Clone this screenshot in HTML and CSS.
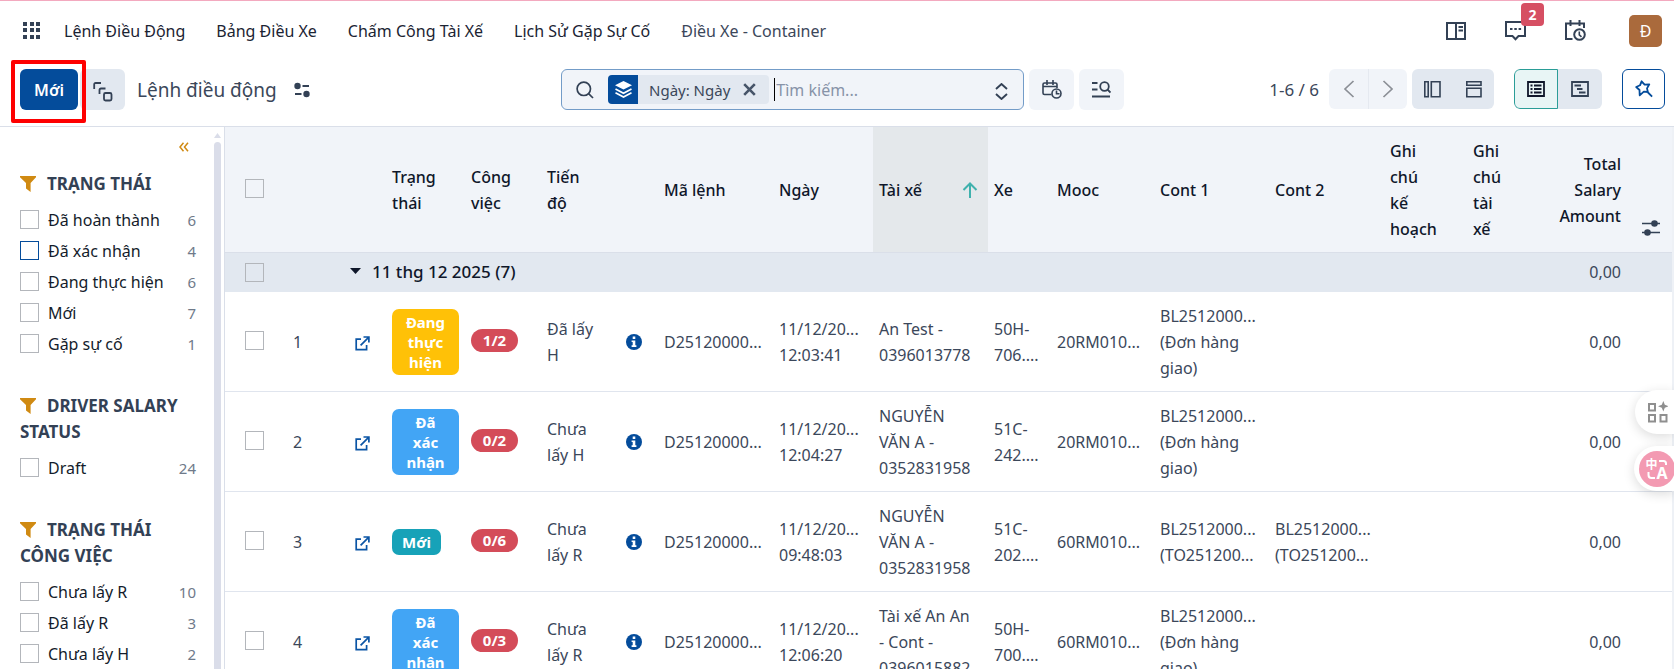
FILE: index.html
```html
<!DOCTYPE html>
<html lang="vi">
<head>
<meta charset="utf-8">
<title>Lệnh điều động</title>
<link rel="stylesheet" href="styles.css">
</head>
<body>
<svg class="defs" aria-hidden="true">
  <symbol id="funnel" viewBox="0 0 16 16"><path fill="currentColor" d="M0 0h16v1.2L10.6 7v9L6 12.4V7L0 1.2z"/></symbol>
  <symbol id="open" viewBox="0 0 15 15"><path fill="none" stroke="currentColor" stroke-width="1.7" d="M6 3.2H1.2v10.5h10.4V9M8.5 1h5.4v5.4M13.6 1.4L5.6 9.4"/></symbol>
  <symbol id="info" viewBox="0 0 16 16"><circle cx="8" cy="8" r="8" fill="currentColor"/><path fill="#fff" d="M6.700 2.600h2.600v2.500H6.700zM5.600 6.400h3.700v4.900h1.100v1.700H5.600v-1.700h1.100V8.100H5.600z"/></symbol>
</svg>

<header class="navbar">
  <button class="plain apps" aria-label="Ứng dụng"><svg width="18" height="18" viewBox="0 0 18 18" fill="#334155"><path d="M0 0h4v4H0zM7 0h4v4H7zM13 0h4v4h-4zM0 6h4v4H0zM7 6h4v4H7zM13 6h4v4h-4zM0 13h4v4H0zM7 13h4v4H7zM13 13h4v4h-4z"/></svg></button>
  <nav class="menu">
    <a href="#">Lệnh Điều Động</a>
    <a href="#">Bảng Điều Xe</a>
    <a href="#">Chấm Công Tài Xế</a>
    <a href="#">Lịch Sử Gặp Sự Cố</a>
    <a href="#" class="soft">Điều Xe - Container</a>
  </nav>
  <div class="systray">
    <button class="plain" aria-label="Hướng dẫn"><svg width="20" height="18" viewBox="0 0 20 18" fill="none" stroke="#334155" stroke-width="2"><path d="M1 1h18v16H1zM10 1v16M12.500 5h4.500M12.500 8.500h4.500"/></svg></button>
    <button class="plain chat" aria-label="Tin nhắn"><svg width="21" height="20" viewBox="0 0 21 20" fill="none" stroke="#334155" stroke-width="2"><path d="M1 1h19v14h-6.500L10.500 18.200 7.500 15H1z"/><path d="M5 8h2.500M9.300 8h2.500M13.600 8h2.500" stroke-width="2.200"/></svg><span class="badge">2</span></button>
    <button class="plain" aria-label="Hoạt động"><svg width="21" height="21" viewBox="0 0 21 21" fill="none" stroke="#334155" stroke-width="2"><path d="M7.500 19H1V3.500h18V8M5.500 0v6M14.500 0v6"/><circle cx="14.500" cy="14.500" r="5.300"/><path d="M14.300 11.500v3.300l2.200 2" stroke-width="1.600"/></svg></button>
    <button class="avatar">Đ</button>
  </div>
</header>

<div class="panel">
  <div class="panel-left">
    <span class="marked"><button class="btn-new">Mới</button></span>
    <button class="btn-dup" aria-label="Nhân bản"><svg width="20" height="20" viewBox="0 0 20 20" fill="none" stroke="#334155" stroke-width="1.800"><path d="M1.200 7V2.500Q1.200 1 2.700 1H8M6.500 12V8Q6.500 6.500 8 6.500h4.500"/><rect x="11" y="11" width="7.500" height="7.500" rx="1.500"/></svg></button>
    <h1>Lệnh điều động</h1>
    <button class="plain" aria-label="Tùy chọn"><svg width="16" height="16" viewBox="0 0 16 16"><circle cx="3.500" cy="4" r="3.200" fill="#334155"/><circle cx="12.500" cy="12" r="3.200" fill="#334155"/><path d="M8.500 4H15M1 12h6.500" stroke="#334155" stroke-width="1.800"/></svg></button>
  </div>
  <div class="panel-mid">
    <div class="search">
      <svg class="lens" width="18" height="18" viewBox="0 0 18 18" fill="none" stroke="#334155" stroke-width="1.700"><circle cx="7.800" cy="7.800" r="6.700"/><path d="M12.600 12.600L17 17"/></svg>
      <span class="facet">
        <span class="facet-icon"><svg width="17" height="17" viewBox="0 0 17 17"><path d="M8.500 0L17 4.300 8.500 8.600 0 4.300z" fill="#fff"/><path d="M.5 8l8 4.200 8-4.200M.5 11.800l8 4.200 8-4.200" fill="none" stroke="#fff" stroke-width="1.700"/></svg></span>
        <span class="facet-label">Ngày: Ngày</span>
        <button class="plain" aria-label="Xóa"><svg width="13" height="13" viewBox="0 0 13 13"><path d="M1.200 1.200l10.600 10.600M11.800 1.200L1.200 11.800" stroke="#475569" stroke-width="2.600"/></svg></button>
      </span>
      <span class="caret"></span>
      <input type="text" placeholder="Tìm kiếm..." aria-label="Tìm kiếm">
      <button class="plain updown" aria-label="Mở bộ lọc"><svg width="13" height="17" viewBox="0 0 13 17" fill="none" stroke="#334155" stroke-width="1.900"><path d="M1 6l5.500-5 5.500 5M1 11l5.500 5 5.500-5"/></svg></button>
    </div>
    <button class="tool" aria-label="Lọc theo ngày"><svg width="20" height="19" viewBox="0 0 20 19" fill="none" stroke="#334155" stroke-width="1.600"><path d="M9.500 14.500H2.500Q1 14.500 1 13V4.500Q1 3 2.500 3h11Q15 3 15 4.500V8M1 6.500h14M5 0v5M11 0v5"/><circle cx="14.500" cy="13.500" r="4.500"/><path d="M14.500 10.500v3.300h3"/></svg></button>
    <button class="tool" aria-label="Tìm nâng cao"><svg width="19" height="17" viewBox="0 0 19 17" fill="none" stroke="#334155" stroke-width="1.800"><circle cx="12.500" cy="5.500" r="4.300"/><path d="M15.500 8.500l3 3M0 2h5.500M0 8.500h5.500M0 15.500h18"/></svg></button>
  </div>
  <div class="panel-right">
    <span class="pager-text">1-6 / 6</span>
    <div class="group pager">
      <button aria-label="Trước"><svg width="12" height="18" viewBox="0 0 12 18"><path d="M10.500 1L2 9l8.500 8" fill="none" stroke="#8b8f96" stroke-width="1.700"/></svg></button>
      <button aria-label="Sau"><svg width="12" height="18" viewBox="0 0 12 18"><path d="M1.500 1L10 9l-8.500 8" fill="none" stroke="#8b8f96" stroke-width="1.700"/></svg></button>
    </div>
    <div class="group split">
      <button aria-label="Chia dọc"><svg width="17" height="17" viewBox="0 0 17 17" fill="none" stroke="#334155" stroke-width="1.600"><path d="M.8.8h3.400v15H.8zM7.300.8h8.700v15H7.300z"/></svg></button>
      <button aria-label="Chia ngang"><svg width="16" height="17" viewBox="0 0 16 17" fill="none" stroke="#334155" stroke-width="1.600"><path d="M.8.800h14.200v3.400H.8zM.8 7.300h14.200v8.500H.8z"/></svg></button>
    </div>
    <div class="group views">
      <button class="active" aria-label="Danh sách"><svg width="18" height="16" viewBox="0 0 18 16" fill="none" stroke="#0f172a" stroke-width="1.800"><path d="M1 1h16v14H1zM3.500 4.500h2M7 4.500h7.500M3.500 8h2M7 8h7.500M3.500 11.500h2M7 11.500h7.500"/></svg></button>
      <button aria-label="Gantt"><svg width="18" height="16" viewBox="0 0 18 16" fill="none" stroke="#334155" stroke-width="1.800"><path d="M1 1h16v14H1zM3.500 4.500h6.500M6 8h5.500M8 11.500h6.500"/></svg></button>
    </div>
    <button class="pin" aria-label="Ghim"><svg width="18" height="18" viewBox="0 0 18 18" fill="none" stroke="#044c9b" stroke-width="1.800" stroke-linejoin="round"><path d="M6.600 1.300L9.600 4.600 14.300 4.300 12 8.400 12.900 12 8.800 11.600 4.700 15.300 4.500 10 1.200 7 5 5.300zM12.500 12l4.600 4.600"/></svg></button>
  </div>
</div>

<main class="content">
  <aside class="sidebar">
    <div class="filters">
      <button class="plain collapse" aria-label="Thu gọn"><svg width="10" height="10" viewBox="0 0 10 10" fill="none" stroke="#d08a12" stroke-width="1.500"><path d="M4.500.8L1 5l3.500 4.200M9 .8L5.500 5 9 9.200"/></svg></button>
      <section>
        <h2><svg width="16" height="16"><use href="#funnel"/></svg>TRẠNG THÁI</h2>
        <label><input type="checkbox"><span>Đã hoàn thành</span><small>6</small></label>
        <label><input type="checkbox" class="hot"><span>Đã xác nhận</span><small>4</small></label>
        <label><input type="checkbox"><span>Đang thực hiện</span><small>6</small></label>
        <label><input type="checkbox"><span>Mới</span><small>7</small></label>
        <label><input type="checkbox"><span>Gặp sự cố</span><small>1</small></label>
      </section>
      <section>
        <h2><svg width="16" height="16"><use href="#funnel"/></svg>DRIVER SALARY STATUS</h2>
        <label><input type="checkbox"><span>Draft</span><small>24</small></label>
      </section>
      <section>
        <h2><svg width="16" height="16"><use href="#funnel"/></svg>TRẠNG THÁI CÔNG VIỆC</h2>
        <label><input type="checkbox"><span>Chưa lấy R</span><small>10</small></label>
        <label><input type="checkbox"><span>Đã lấy R</span><small>3</small></label>
        <label><input type="checkbox"><span>Chưa lấy H</span><small>2</small></label>
      </section>
    </div>
    <div class="scroll"><svg width="7" height="5" viewBox="0 0 7 5"><path d="M3.500 0L7 5H0z" fill="#dadde9"/></svg><i></i></div>
  </aside>

  <div class="list">
    <table>
      <colgroup><col class="c58"><col class="c55"><col class="c48"><col class="c79"><col class="c76"><col class="c79"><col class="c38"><col class="c115"><col class="c100"><col class="c115"><col class="c63"><col class="c103"><col class="c115"><col class="c115"><col class="c83"><col class="c69"><col class="c91"><col class="c45"></colgroup>
      <thead>
        <tr>
          <th class="sel"><input type="checkbox" aria-label="Chọn tất cả"></th><th></th><th></th>
          <th>Trạng<br>thái</th><th>Công<br>việc</th><th>Tiến<br>độ</th><th></th>
          <th>Mã lệnh</th><th>Ngày</th>
          <th class="sorted"><span>Tài xế<svg width="16" height="16" viewBox="0 0 16 16" fill="none" stroke="#3fb1ad" stroke-width="2"><path d="M8 16V1.500M1.500 8L8 1.500 14.500 8"/></svg></span></th>
          <th>Xe</th><th>Mooc</th><th>Cont 1</th><th>Cont 2</th>
          <th>Ghi<br>chú<br>kế<br>hoạch</th><th>Ghi<br>chú<br>tài<br>xế</th>
          <th class="num">Total<br>Salary<br>Amount</th>
          <th class="opt"><button class="plain" aria-label="Cột tùy chọn"><svg width="18" height="16" viewBox="0 0 18 16"><path d="M0 3.500h18M0 12.500h18" stroke="#334155" stroke-width="1.300"/><circle cx="12.500" cy="3.500" r="3.300" fill="#334155"/><circle cx="5.500" cy="12.500" r="3.300" fill="#334155"/></svg></button></th>
        </tr>
      </thead>
      <tbody>
        <tr class="grp">
          <td class="sel"><input type="checkbox" aria-label="Chọn nhóm"></td><td></td>
          <th colspan="14" scope="rowgroup"><svg width="11" height="6" viewBox="0 0 11 6"><path d="M0 0h11L5.500 6z" fill="#0f172a"/></svg>11 thg 12 2025 (7)</th>
          <td class="num">0,00</td><td></td>
        </tr>
        <tr>
          <td class="sel"><input type="checkbox" aria-label="Chọn dòng 1"></td><td class="idx">1</td>
          <td class="ic"><svg width="15" height="15"><use href="#open"/></svg></td>
          <td><span class="tag amber">Đang<br>thực<br>hiện</span></td><td class="work"><span class="pill">1/2</span></td><td>Đã lấy<br>H</td>
          <td><svg class="inf" width="16" height="16"><use href="#info"/></svg></td>
          <td>D25120000...</td><td>11/12/20...<br>12:03:41</td><td>An Test -<br>0396013778</td><td>50H-<br>706....</td><td>20RM010...</td>
          <td>BL2512000...<br>(Đơn hàng<br>giao)</td><td></td><td></td><td></td><td class="num">0,00</td><td></td>
        </tr>
        <tr>
          <td class="sel"><input type="checkbox" aria-label="Chọn dòng 2"></td><td class="idx">2</td>
          <td class="ic"><svg width="15" height="15"><use href="#open"/></svg></td>
          <td><span class="tag blue">Đã<br>xác<br>nhận</span></td><td class="work"><span class="pill">0/2</span></td><td>Chưa<br>lấy H</td>
          <td><svg class="inf" width="16" height="16"><use href="#info"/></svg></td>
          <td>D25120000...</td><td>11/12/20...<br>12:04:27</td><td>NGUYỄN<br>VĂN A -<br>0352831958</td><td>51C-<br>242....</td><td>20RM010...</td>
          <td>BL2512000...<br>(Đơn hàng<br>giao)</td><td></td><td></td><td></td><td class="num">0,00</td><td></td>
        </tr>
        <tr>
          <td class="sel"><input type="checkbox" aria-label="Chọn dòng 3"></td><td class="idx">3</td>
          <td class="ic"><svg width="15" height="15"><use href="#open"/></svg></td>
          <td><span class="tag teal">Mới</span></td><td class="work"><span class="pill">0/6</span></td><td>Chưa<br>lấy R</td>
          <td><svg class="inf" width="16" height="16"><use href="#info"/></svg></td>
          <td>D25120000...</td><td>11/12/20...<br>09:48:03</td><td>NGUYỄN<br>VĂN A -<br>0352831958</td><td>51C-<br>202....</td><td>60RM010...</td>
          <td>BL2512000...<br>(TO251200...</td><td>BL2512000...<br>(TO251200...</td><td></td><td></td><td class="num">0,00</td><td></td>
        </tr>
        <tr>
          <td class="sel"><input type="checkbox" aria-label="Chọn dòng 4"></td><td class="idx">4</td>
          <td class="ic"><svg width="15" height="15"><use href="#open"/></svg></td>
          <td><span class="tag blue">Đã<br>xác<br>nhận</span></td><td class="work"><span class="pill">0/3</span></td><td>Chưa<br>lấy R</td>
          <td><svg class="inf" width="16" height="16"><use href="#info"/></svg></td>
          <td>D25120000...</td><td>11/12/20...<br>12:06:20</td><td>Tài xế An An<br>- Cont -<br>0396015882</td><td>50H-<br>700....</td><td>60RM010...</td>
          <td>BL2512000...<br>(Đơn hàng<br>giao)</td><td></td><td></td><td></td><td class="num">0,00</td><td></td>
        </tr>
      </tbody>
    </table>
  </div>
</main>

<div class="float">
  <button class="float-apps" aria-label="Tiện ích"><svg width="20" height="22" viewBox="0 0 20 22" fill="none" stroke="#8f8f8f" stroke-width="2"><path d="M1 3h6v6.500H1zM1 14h6v6.500H1zM12.500 14h6v6.500h-6z"/><path d="M15.300 0l1.500 3.800 3.700 1.500-3.700 1.500-1.500 3.700-1.500-3.700L10 5.300l3.800-1.500z" fill="#8f8f8f" stroke="none"/></svg></button>
  <button class="float-lang" aria-label="Dịch"><svg width="36" height="36" viewBox="0 0 36 36"><circle cx="18" cy="18" r="18" fill="#f39ab2"/><g fill="#fff" font-family="'Noto Sans CJK SC', sans-serif" font-weight="700"><text x="6.500" y="18" font-size="12">中</text><text x="17.500" y="28" font-size="16" font-family="'Noto Sans', sans-serif">A</text></g><path d="M20 10h4.500q2.500 0 2.500 2.500V14M9.500 21v3q0 3 3 3H16" fill="none" stroke="#fff" stroke-width="2"/></svg></button>
</div>
</body>
</html>
```
FILE: styles.css
```css
* { box-sizing: border-box; }

body {
  margin: 0;
  height: 100vh;
  overflow: hidden;
  display: flex;
  flex-direction: column;
  position: relative;
  border-top: 1px solid #f3a9bf;
  background: #fff;
  color: #3b475a;
  font: 16px/26px "Noto Sans", "Open Sans", sans-serif;
}

.defs { position: absolute; width: 0; height: 0; }
svg { display: block; flex: none; }
button { font: inherit; color: inherit; cursor: pointer; padding: 0; border: 0; display: flex; align-items: center; justify-content: center; }
.plain { background: none; }

/* Top navigation */
.navbar { display: flex; align-items: center; height: 59px; flex: none; padding: 0 12px 0 23px; }
.menu { display: flex; gap: 31px; margin-left: 23px; }
.menu a { color: #1b2433; text-decoration: none; white-space: nowrap; }
.menu .soft { color: #3b475a; }
.systray { margin-left: auto; display: flex; align-items: center; gap: 39px; }
.chat { position: relative; }
.badge {
  position: absolute; left: 16px; top: -18px;
  width: 23px; height: 23px; border-radius: 4px;
  background: #d64f63; color: #fff; font-size: 14px; font-weight: 700; line-height: 23px;
}
.avatar { width: 33px; height: 32px; margin-left: 4px; border-radius: 5px; background: #aa6a3c; color: #fff; }

/* Control panel */
.panel {
  display: grid; grid-template-columns: minmax(0, 1fr) 563px minmax(0, 1fr); align-items: start; flex: none;
  height: 67px; padding: 9px 9px 0 20px;
  border-bottom: 1px solid #dadfe9;
}
.panel-left { display: flex; align-items: center; height: 41px; }
.panel-mid { display: flex; gap: 5px; height: 41px; }
.panel-right { display: flex; justify-content: flex-end; height: 40px; }

.marked { position: relative; }
.marked::after { content: ""; position: absolute; inset: -9px -8px -13px -9px; border: 4px solid #fe0000; border-radius: 2px; pointer-events: none; }
.btn-new { width: 58px; height: 41px; border-radius: 6px; background: #044c9b; color: #fff; font-weight: 600; }
.btn-dup { width: 45px; height: 41px; margin-left: 2px; padding: 4px 4px 0 0; border-radius: 6px; background: #e2e8f0; }
.btn-dup { padding: 4px 0 0; }
h1 { margin: 0 17px 0 12px; font-size: 19px; font-weight: 400; white-space: nowrap; }

.search {
  flex: 1; min-width: 0; display: flex; align-items: center;
  border: 1px solid #739cc8; border-radius: 6px; background: #f1f4f9; padding: 0 15px 0 14px;
}
.facet { display: flex; align-items: center; height: 29px; margin-left: 14px; padding-right: 13px; gap: 13px; background: #e2e8f0; border-radius: 4px; overflow: hidden; }
.facet-icon { width: 30px; height: 29px; display: flex; align-items: center; justify-content: center; background: #044c9b; margin-right: -2px; }
.facet-label { font-size: 15px; white-space: nowrap; }
.caret { width: 1px; height: 23px; background: #000; margin-left: 5px; }
.search input { flex: 1; min-width: 0; border: 0; outline: 0; padding: 0 1px; background: none; font: inherit; }
.search input::placeholder { color: #8793a8; }
.updown { padding-top: 4px; }
.tool { width: 45px; border-radius: 6px; background: #f1f4f9; }

.pager-text { font-size: 17px; line-height: 41px; margin-right: 10px; white-space: nowrap; }
.group { display: flex; border-radius: 6px; overflow: hidden; background: #e2e8f0; }
.group button { background: none; }
.pager { background: #f1f4f9; }
.pager button { width: 39px; }
.pager button + button { border-left: 1px solid #e5e9f0; }
.split { margin-left: 5px; }
.split button { width: 41px; }
.views { margin-left: 20px; }
.views button { width: 44px; }
.views .active { background: #e8f5f5; border: 1px solid #2a9d97; border-radius: 6px 0 0 6px; }
.pin { width: 43px; margin-left: 20px; border: 1px solid #044c9b; border-radius: 6px; background: #fff; }

/* Body */
.content { flex: 1; min-height: 0; display: flex; }

input[type="checkbox"] {
  appearance: none; flex: none; display: block;
  width: 19px; height: 19px; margin: 0;
  border: 1px solid #b3b6bb; background: transparent;
}
input[type="checkbox"].hot { border-color: #044c9b; }

.sidebar { flex: none; width: 225px; display: flex; border-right: 1px solid #dadfe9; overflow: hidden; }
.filters { width: 214px; padding: 14px 18px 0 20px; }
.collapse { margin: 0 7px 0 auto; height: 12px; }
.filters section { margin-bottom: 34px; }
.collapse + section { margin-top: 18px; }
h2 { margin: 0 0 7px; font-size: 17px; font-weight: 700; color: #334155; line-height: 26px; }
h2 svg { display: inline-block; vertical-align: -2px; margin-right: 11px; color: #d08a12; }
.filters label { display: flex; align-items: center; height: 31px; color: #141c2b; }
.filters label span { margin-left: 9px; flex: 1; white-space: nowrap; }
.filters small { font-size: 15px; color: #6f7a8a; }
.scroll { width: 7px; padding-top: 6px; display: flex; flex-direction: column; gap: 4px; }
.scroll i { flex: 1; background: #dadde9; border-radius: 4px 4px 0 0; }

.list { flex: 1; min-width: 0; overflow: hidden; border-right: 2px solid #eef1f6; }
table { width: 100%; table-layout: fixed; border-spacing: 0; }
.c38 { width: 38px; } .c45 { width: 45px; } .c48 { width: 48px; } .c55 { width: 55px; }
.c58 { width: 58px; } .c63 { width: 63px; } .c69 { width: 69px; } .c76 { width: 76px; }
.c79 { width: 79px; } .c83 { width: 83px; } .c91 { width: 91px; } .c100 { width: 100px; }
.c103 { width: 103px; } .c115 { width: 115px; }

th, td { padding: 10px 6px; text-align: left; vertical-align: middle; white-space: nowrap; border-bottom: 1px solid #e0e5ee; }
th { font-weight: 500; color: #0f172a; }
thead th { height: 126px; background: #f1f4f9; border-color: #dadfe9; }
thead .sorted { background: #e4e8eb; }
.sorted span { display: flex; align-items: center; justify-content: space-between; padding-right: 4px; }
tbody tr { height: 100px; }
tbody .grp { height: 39px; background: #e2e8f0; }
.grp td, .grp th { padding-top: 6px; padding-bottom: 6px; border-color: #e2e8f0; }
.grp th { padding-left: 12px; font-size: 17px; }
.grp th svg { display: inline-block; vertical-align: 4px; margin-right: 11px; }
.sel { padding-left: 20px; padding-bottom: 12px; }
.idx { padding-left: 10px; }
.ic { color: #0b55a5; padding-left: 17px; padding-top: 14px; }
.work { padding-bottom: 14px; }
.inf { color: #044c9b; }
.num { text-align: right; }
.opt { vertical-align: bottom; padding: 0 12px 16px 15px; }

.tag { display: inline-block; min-width: 49px; padding: 3px 10px; border-radius: 7px; color: #fff; font-size: 15px; font-weight: 700; line-height: 20px; text-align: center; vertical-align: middle; }
.amber { background: #ffc107; min-width: 67px; }
.blue { background: #42a5f5; min-width: 67px; }
.teal { background: #17a2b8; }
.pill { display: inline-block; width: 47px; border-radius: 12px; background: #d44c59; color: #fff; font-size: 15px; font-weight: 700; line-height: 23px; text-align: center; }

/* Floating helpers at the window edge */
.float { position: absolute; right: 0; top: 389px; width: 40px; display: flex; flex-direction: column; gap: 12px; }
.float button { background: #fff; box-shadow: 0 3px 12px rgba(0, 0, 0, .14); }
.float-apps { width: 39px; height: 44px; margin-left: 1px; border-radius: 22px 0 0 22px; padding-left: 6px; }
.float-lang { width: 40px; height: 45px; border-radius: 23px 0 0 23px; overflow: hidden; padding-left: 5px; }
```
